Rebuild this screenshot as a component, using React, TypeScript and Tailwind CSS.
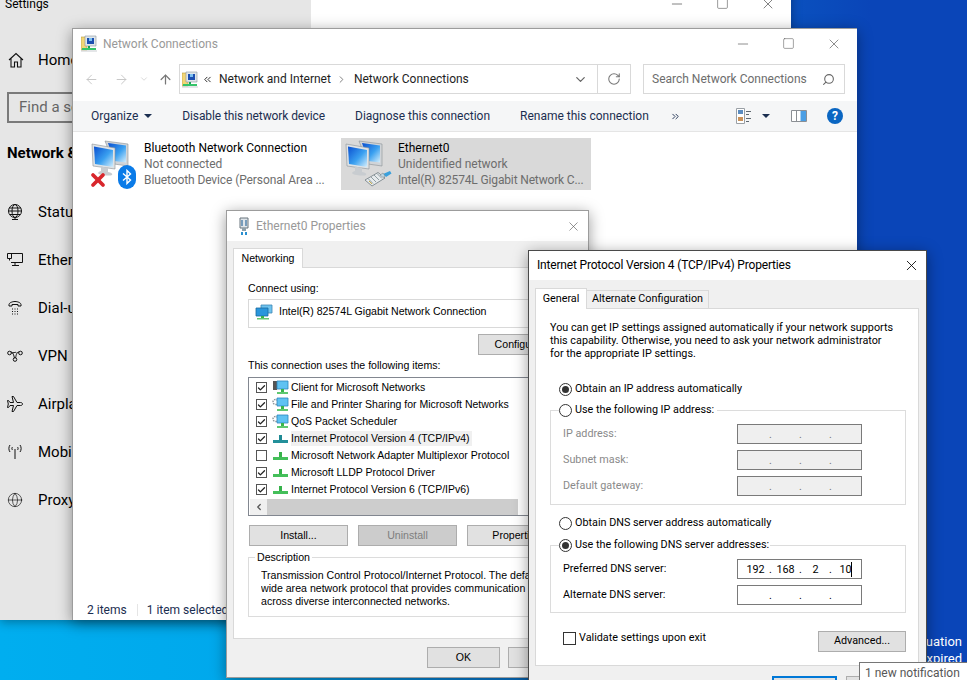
import React from "react";
import {
  ArrowLeft,
  ArrowRight,
  ArrowUp,
  Check,
  ChevronDown,
  ChevronLeft,
  ChevronRight,
  ChevronsLeft,
  ChevronsRight,
  Globe,
  Minus,
  RotateCw,
  Search,
  Square,
  X,
} from "lucide-react";

// --- small drawings ---

const HomeIcon = () => (
  <svg width="16" height="16" viewBox="0 0 16 16" fill="none" stroke="#111" strokeWidth="1.1">
    <path d="M1 8 8 1.5 15 8M3 6.5V15h3.5v-5h3v5H13V6.5" />
  </svg>
);

const StatusIcon = () => (
  <svg width="16" height="16" viewBox="0 0 16 16" fill="none" stroke="#111" strokeWidth="1">
    <circle cx="8" cy="7" r="6.5" />
    <ellipse cx="8" cy="7" rx="3" ry="6.5" />
    <path d="M1.5 7h13M2 4h12M3 10.5h10M8 13.5v2M5 15.5h6" />
  </svg>
);

const EthernetIcon = () => (
  <svg width="16" height="16" viewBox="0 0 16 16" fill="none" stroke="#111" strokeWidth="1">
    <path d="M4 1.5h11.5v9H4M8 10.5v3M5 13.5h7M.5 1.5h4v5h-4zM2.5 6.5v2" />
  </svg>
);

const DialIcon = () => (
  <svg width="16" height="16" viewBox="0 0 16 16" fill="none" stroke="#111" strokeWidth="1">
    <path d="M2 6V4.500C2 3 5 1.500 8 1.500S14 3 14 4.500V6h-3V4.500H5V6z" />
    <path d="M5 9h1M7.500 9h1M10 9h1M5 11.500h1M7.500 11.500h1M10 11.500h1M5 14h1M7.500 14h1M10 14h1" />
  </svg>
);

const VpnIcon = () => (
  <svg width="16" height="16" viewBox="0 0 16 16" fill="none" stroke="#111" strokeWidth="1">
    <circle cx="2.500" cy="5" r="1.800" />
    <circle cx="13.500" cy="5" r="1.800" />
    <circle cx="8" cy="11.500" r="1.800" />
    <path d="M4 4c3 0 3 7 4 6M12 4C9 4 9 9 8.500 10M4.300 5c2 0 4-1 5-.5" />
  </svg>
);

const PlaneIcon = () => (
  <svg width="16" height="16" viewBox="0 0 16 16" fill="none" stroke="#111" strokeWidth="1">
    <path d="M15.500 8c0-1-1-1.500-2-1.500H10L6.500.5H5l1.500 6H3L1.500 4.500H.5l.8 3.500-.8 3.500h1L3 9.500h3.500L5 15.500h1.500L10 9.500h3.500c1 0 2-.5 2-1.500z" />
  </svg>
);

const MobileIcon = () => (
  <svg width="16" height="16" viewBox="0 0 16 16" fill="none" stroke="#111" strokeWidth="1">
    <path d="M8 5v10M3 1C1.500 3 1.500 6 3 8M13 1c1.500 2 1.500 5 0 7M5.500 3c-.8 1-.8 2 0 3M10.500 3c.8 1 .8 2 0 3" />
  </svg>
);

const NetIcon = ({ id }: { id: string }) => (
  <svg width="44" height="38" viewBox="0 0 44 38">
    <defs>
      <linearGradient id={id} x1="0" y1="0" x2="1" y2="1">
        <stop offset="0" stopColor="#0a4fd0" />
        <stop offset="0.55" stopColor="#3aa0f0" />
        <stop offset="1" stopColor="#d4eefc" />
      </linearGradient>
    </defs>
    <path d="M14 1 37 4v22l-14-2z" fill="#d0d4d8" stroke="#8a9096" strokeWidth="0.6" />
    <path d="M17 3 35 5.500v17l-12-1.500z" fill={`url(#${id})`} />
    <path d="M1 4 24 8v21L2 26z" fill="#dfe3e6" stroke="#8a9096" strokeWidth="0.6" />
    <path d="M3 6.500 22 10v17L4 24z" fill={`url(#${id})`} />
    <path d="M10 26.500 17 28v4c3 .5 5 1.500 4 3-2 1-10 .5-13-1-2-1 0-2.500 2-3z" fill="#c8ccd0" />
  </svg>
);

const PlugBadge = () => (
  <svg width="28" height="17" viewBox="0 0 28 17">
    <path d="M1 10 14 2.500l7 5.500-13 8z" fill="#e6eaec" stroke="#6f7a80" strokeWidth="0.8" />
    <path d="M4 8.500l5 5M7 7l5 5M10 5l5 5M13 3.500l5 5" stroke="#7a8a90" strokeWidth="0.8" />
    <path d="M5 11l3 3" stroke="#c9b04a" strokeWidth="1" />
    <path d="M19 4l7-3 1.500 2.500L22 7z" fill="#39a0dc" />
    <path d="M16 5l3-2 2 3-2 1.500z" fill="#bcd6e4" stroke="#6f7a80" strokeWidth="0.5" />
  </svg>
);

const BluetoothBadge = () => (
  <div className="flex h-[24px] w-[18px] items-center justify-center rounded-[9px] bg-[#0a7be8]">
    <svg width="10" height="16" viewBox="0 0 10 16" fill="none" stroke="#fff" strokeWidth="1.400">
      <path d="M1 4.500 8.500 11 5 14.500v-13L8.500 5 1 11.500" />
    </svg>
  </div>
);

const SmallFolderNet = () => (
  <svg width="16" height="17" viewBox="0 0 16 17">
    <path d="M0 2h6v13H0z" fill="#f2d675" stroke="#b59a3c" strokeWidth="0.6" />
    <path d="M4 1h11v10H4z" fill="#dfe6ea" stroke="#8b959b" strokeWidth="0.6" />
    <path d="M6 3h7v6H6z" fill="#1c4fb0" />
    <path d="M8 3h3v3H8z" fill="#7cc0f0" />
    <path d="M7 11h2v2H7z" fill="#18a558" />
    <path d="M1 13h14v2H1z" fill="#35c46a" />
    <path d="M0 15.500h16v1H0z" fill="#c9ccd0" />
  </svg>
);

const SmallPlug = () => (
  <svg width="12" height="18" viewBox="0 0 12 18">
    <path d="M2 1h8v10H2z" fill="#dfe5ea" stroke="#68747c" strokeWidth="1" />
    <path d="M4 3v6M8 3v6" stroke="#4c7fa8" strokeWidth="1.400" />
    <path d="M4 11h4v3H4z" fill="#8fa0aa" />
    <path d="M3 15h2v3H3zM7 15h2v3H7z" fill="#2a8fd0" />
  </svg>
);

const AdapterIcon = () => (
  <svg width="18" height="16" viewBox="0 0 18 16">
    <path d="M6 1h11v8H6z" fill="#6fc3ee" stroke="#3d87b4" strokeWidth="0.8" />
    <path d="M1 4h12v8H1z" fill="#2a96dc" stroke="#1b6a9e" strokeWidth="0.8" />
    <path d="M6 12h3v2H6z" fill="#39b34a" />
    <path d="M2 14h12v1.500H2z" fill="#67c66f" />
  </svg>
);

const ClientIcon = ({ gear }: { gear?: boolean }) => (
  <svg width="17" height="16" viewBox="0 0 17 16">
    {gear ? (
      <circle cx="3.500" cy="5" r="2.500" fill="none" stroke="#8a9298" strokeWidth="1.400" strokeDasharray="1.500 1" />
    ) : (
      <path d="M1 1h4v9H1z" fill="#555" />
    )}
    <path d="M5 1h11v8H5z" fill="#5fc2f2" stroke="#2c86bd" strokeWidth="0.8" />
    <path d="M9 9h3v3H9z" fill="#3ab54a" />
    <path d="M5 12h11v2H5z" fill="#5fc870" />
  </svg>
);

const ProtocolIcon = ({ selected }: { selected?: boolean }) => (
  <svg width="15" height="10" viewBox="0 0 15 10">
    <path d="M6 1h3v5H6z" fill={selected ? "#1f8a94" : "#36b24a"} />
    <path d="M0 6h15v3H0z" fill={selected ? "#23909a" : "#44bf5a"} />
  </svg>
);

const ViewIcon = () => (
  <svg width="16" height="16" viewBox="0 0 16 16">
    <path d="M.5.500h8v15h-8z" fill="#fff" stroke="#9aa0a6" />
    <path d="M2 2h5v4H2z" fill="#5b8cc0" />
    <path d="M2 9h5v4H2z" fill="#c9925a" />
    <path d="M10 3h5v1h-5zM10 6h3v1h-3zM10 10h5v1h-5zM10 13h3v1h-3z" fill="#5e6870" />
  </svg>
);

const PaneIcon = () => (
  <svg width="16" height="12" viewBox="0 0 16 12">
    <path d="M.5.500h15v11H.5z" fill="#fff" stroke="#8b8f94" />
    <path d="M5.500 1v10" stroke="#8b8f94" />
    <path d="M9.500 1h5.500v10H9.500z" fill="#4a9ee4" />
  </svg>
);

// --- small controls ---

const Caret = ({ className = "" }: { className?: string }) => (
  <span className={`h-0 w-0 border-x-[4px] border-t-[4px] border-x-transparent border-t-[#1b2e50] ${className}`} />
);

const Button = ({
  label,
  width,
  disabled,
}: {
  label: string;
  width: string;
  disabled?: boolean;
}) => (
  <div
    className={`flex h-[21px] shrink-0 items-center justify-center border border-[#adadad] ${width} ${
      disabled ? "bg-[#cccccc] text-[#7e7e7e]" : "bg-[#e1e1e1] text-black"
    }`}
  >
    {label}
  </div>
);

const Radio = ({ on }: { on?: boolean }) => (
  <span className="flex h-[13px] w-[13px] shrink-0 items-center justify-center rounded-full border border-[#333] bg-white">
    {on && <span className="h-[7px] w-[7px] rounded-full bg-[#333]" />}
  </span>
);

const CheckBox = ({ on }: { on?: boolean }) => (
  <span className="flex h-[11px] w-[11px] shrink-0 items-center justify-center border border-[#555] bg-white">
    {on && <Check size={10} strokeWidth={3.5} className="text-[#222]" />}
  </span>
);

const IpField = ({
  values = ["", "", "", ""],
  disabled,
  caret,
}: {
  values?: string[];
  disabled?: boolean;
  caret?: boolean;
}) => (
  <div
    className={`flex h-[20px] w-[125px] items-center border border-[#7a7a7a] pl-[4px] ${
      disabled ? "bg-[#efefef] text-[#777]" : "bg-white text-black"
    }`}
  >
    {values.map((v, i) => (
      <React.Fragment key={i}>
        <span className="relative h-[15px] w-[27px] text-center leading-[15px]">
          {v}
          {caret && i === 3 && <span className="absolute right-[7px] top-0 h-[15px] w-px bg-black" />}
        </span>
        {i < 3 && <span className="w-[3px] text-center leading-[15px]">.</span>}
      </React.Fragment>
    ))}
  </div>
);

const IpRow = ({
  label,
  muted,
  children,
}: {
  label: string;
  muted?: boolean;
  children: React.ReactNode;
}) => (
  <div className="flex items-center justify-between pr-[43px]">
    <span className={muted ? "text-[#8a8a8a]" : "text-black"}>{label}</span>
    {children}
  </div>
);

const sidebar = [
  { label: "Status", icon: <StatusIcon /> },
  { label: "Ethernet", icon: <EthernetIcon /> },
  { label: "Dial-up", icon: <DialIcon /> },
  { label: "VPN", icon: <VpnIcon /> },
  { label: "Airplane mode", icon: <PlaneIcon /> },
  { label: "Mobile hotspot", icon: <MobileIcon /> },
  { label: "Proxy", icon: <Globe size={16} strokeWidth={1} className="text-[#111]" /> },
];

const items = [
  { label: "Client for Microsoft Networks", on: true, icon: <ClientIcon /> },
  { label: "File and Printer Sharing for Microsoft Networks", on: true, icon: <ClientIcon gear /> },
  { label: "QoS Packet Scheduler", on: true, icon: <ClientIcon gear /> },
  { label: "Internet Protocol Version 4 (TCP/IPv4)", on: true, icon: <ProtocolIcon selected />, selected: true },
  { label: "Microsoft Network Adapter Multiplexor Protocol", on: false, icon: <ProtocolIcon /> },
  { label: "Microsoft LLDP Protocol Driver", on: true, icon: <ProtocolIcon /> },
  { label: "Internet Protocol Version 6 (TCP/IPv6)", on: true, icon: <ProtocolIcon /> },
];

export default function App() {
  return (
    <div className="relative h-[680px] w-[967px] overflow-hidden bg-[linear-gradient(90deg,#00aeef_0%,#00a8ec_25%,#0a6fd0_60%,#0a45b8_90%)] font-['Roboto',sans-serif] text-[12px] text-black">
      {/* desktop watermark */}
      <div className="absolute right-[5px] top-[633px] text-right text-[13px] leading-[17px] text-white">
        <div>Evaluation</div>
        <div>expired</div>
      </div>

      {/* Settings window, mostly hidden */}
      <div className="absolute left-0 top-[-12px] flex h-[632px] w-[791px] bg-white shadow-[0_2px_10px_rgba(0,0,0,0.35)]">
        <div className="w-[311px] bg-[#e6e6e6] pt-[8px]">
          <div className="pl-[5px] text-[12px] leading-[16px]">Settings</div>
          <div className="mt-[38px] flex items-center gap-[14px] pl-[8px] text-[15px] leading-[20px]">
            <HomeIcon />
            <span>Home</span>
          </div>
          <div className="ml-[7px] mt-[22px] flex h-[31px] w-[280px] items-center border-2 border-[#7a7a7a] pb-px pl-[10px] text-[15px] text-[#666]">
            Find a setting
          </div>
          <div className="mt-[20px] pl-[7px] text-[15px] font-bold leading-[20px]">Network &amp; Internet</div>
          <div className="mt-[39px] flex flex-col gap-[28px]">
            {sidebar.map((s) => (
              <div key={s.label} className="flex items-center gap-[15px] pl-[7px] text-[15px] leading-[20px]">
                {s.icon}
                <span>{s.label}</span>
              </div>
            ))}
          </div>
        </div>
        <div className="flex flex-1 justify-end gap-[31px] pr-[15px] pt-[8px] text-[#444]">
          <Minus size={16} strokeWidth={1} />
          <Square size={13} strokeWidth={1} className="mt-[1px]" />
          <X size={16} strokeWidth={1} />
        </div>
      </div>

      {/* Network Connections */}
      <div className="absolute left-[72px] top-[28px] flex h-[592px] w-[785px] flex-col border-t border-l border-[#9c9c9c] bg-white shadow-[0_3px_14px_rgba(0,0,0,0.4)]">
        <div className="flex h-[29px] shrink-0 items-center pl-[8px] text-[#999999]">
          <SmallFolderNet />
          <span className="ml-[6px]">Network Connections</span>
          <div className="ml-auto flex items-center gap-[31px] pr-[15px] text-[#555]">
            <Minus size={16} strokeWidth={1} />
            <Square size={13} strokeWidth={1} />
            <X size={16} strokeWidth={1} />
          </div>
        </div>

        <div className="mt-[6px] flex h-[30px] shrink-0 items-center">
          <div className="flex w-[106px] items-center pl-[11px] text-[#c4c4c4]">
            <ArrowLeft size={15} strokeWidth={1.5} />
            <ArrowRight size={15} strokeWidth={1.5} className="ml-[15px]" />
            <ChevronDown size={10} strokeWidth={1.5} className="ml-[10px]" />
            <ArrowUp size={15} strokeWidth={2} className="ml-[9px] text-[#777]" />
          </div>
          <div className="flex h-[30px] w-[452px] items-center border border-[#d9d9d9] pl-[2px] text-[#1e1e1e]">
            <SmallFolderNet />
            <ChevronsLeft size={11} className="ml-[4px]" />
            <span className="ml-[6px]">Network and Internet</span>
            <ChevronRight size={11} className="ml-[5px] text-[#777]" />
            <span className="ml-[7px]">Network Connections</span>
            <ChevronDown size={15} strokeWidth={2} className="ml-auto mr-[9px] text-[#666]" />
            <div className="flex h-full w-[33px] items-center justify-center border-l border-[#d9d9d9] text-[#777]">
              <RotateCw size={14} strokeWidth={1.8} />
            </div>
          </div>
          <div className="ml-[12px] flex h-[30px] w-[202px] items-center justify-between border border-[#d9d9d9] pl-[8px] pr-[9px] text-[#6d6d6d]">
            <span>Search Network Connections</span>
            <Search size={13} strokeWidth={2} className="-scale-x-100 text-[#666]" />
          </div>
        </div>

        <div className="mt-[7px] flex h-[31px] shrink-0 items-center border-b border-[#e5e5e5] bg-[#f5f6f7] pl-[18px] text-[#1b2e50]">
          <span>Organize</span>
          <Caret className="ml-[6px]" />
          <span className="ml-[30px] tracking-[-0.1px]">Disable this network device</span>
          <span className="ml-[30px]">Diagnose this connection</span>
          <span className="ml-[30px]">Rename this connection</span>
          <ChevronsRight size={11} strokeWidth={2} className="ml-[21px]" />
          <div className="ml-auto flex items-center pr-[14px]">
            <ViewIcon />
            <Caret className="ml-[10px]" />
            <span className="ml-[21px]">
              <PaneIcon />
            </span>
            <span className="ml-[20px] flex h-[16px] w-[16px] items-center justify-center rounded-full bg-[#0a66c2] text-[12px] font-bold text-white">
              ?
            </span>
          </div>
        </div>

        <div className="flex min-h-0 flex-1 items-start pl-[18px] pt-[6px]">
          <div className="flex h-[52px] w-[250px] items-center">
            <div className="relative h-[52px] w-[53px] shrink-0 pt-[2px]">
              <NetIcon id="screenA" />
              <X size={20} strokeWidth={4.5} className="absolute bottom-0 left-[-3px] text-[#d8262c]" />
              <div className="absolute bottom-[1px] left-[27px]">
                <BluetoothBadge />
              </div>
            </div>
            <div className="flex flex-col leading-[16px] text-[#6d6d6d]">
              <span className="text-black">Bluetooth Network Connection</span>
              <span>Not connected</span>
              <span className="tracking-[-0.1px]">Bluetooth Device (Personal Area ...</span>
            </div>
          </div>
          <div className="flex h-[52px] w-[250px] items-center bg-[#d9d9d9] pl-[4px]">
            <div className="relative h-[52px] w-[53px] shrink-0 pt-[2px]">
              <NetIcon id="screenB" />
              <div className="absolute bottom-[3px] left-[19px]">
                <PlugBadge />
              </div>
            </div>
            <div className="flex flex-col leading-[16px] text-[#6d6d6d]">
              <span className="text-black">Ethernet0</span>
              <span>Unidentified network</span>
              <span className="tracking-[-0.15px]">Intel(R) 82574L Gigabit Network C...</span>
            </div>
          </div>
        </div>

        <div className="flex h-[16px] shrink-0 items-center pb-[4px] pl-[14px] text-[#1b2e50]">
          <span>2 items</span>
          <span className="ml-[10px] h-[12px] w-px bg-[#e5e5e5]" />
          <span className="ml-[9px]">1 item selected</span>
        </div>
      </div>

      {/* Ethernet0 Properties */}
      <div className="absolute left-[226px] top-[210px] flex h-[468px] w-[363px] flex-col border border-[#9c9c9c] bg-[#f0f0f0] font-['Liberation_Sans',sans-serif] text-[10.6px] shadow-[0_3px_14px_rgba(0,0,0,0.4)]">
        <div className="flex h-[30px] shrink-0 items-center bg-white pl-[11px] font-['Roboto',sans-serif] text-[12px] text-[#999999]">
          <SmallPlug />
          <span className="ml-[6px]">Ethernet0 Properties</span>
          <X size={15} strokeWidth={1} className="ml-auto mr-[7px] text-[#555]" />
        </div>
        <div className="flex min-h-0 flex-1 flex-col pl-[6px] pr-[6px] pt-[7px]">
          <div className="z-10 -mb-px flex h-[20px] w-[70px] items-center justify-center border border-b-0 border-[#d9d9d9] bg-white">
            Networking
          </div>
          <div className="h-[372px] border border-[#d9d9d9] bg-white pl-[14px] pt-[13px]">
            <div className="leading-[14px]">Connect using:</div>
            <div className="mt-[4px] flex h-[29px] w-[322px] items-center border border-[#d9d9d9] pb-[3px] pl-[6px]">
              <AdapterIcon />
              <span className="ml-[6px]">Intel(R) 82574L Gigabit Network Connection</span>
            </div>
            <div className="mt-[6px] flex w-[318px] justify-end">
              <Button label="Configure..." width="w-[88px]" />
            </div>
            <div className="mt-[3px] leading-[14px]">This connection uses the following items:</div>
            <div className="mt-[5px] flex h-[139px] w-[322px] flex-col border border-[#828790] pt-px">
              <div className="flex flex-1 flex-col">
                {items.map((it) => (
                  <div key={it.label} className="flex h-[17px] items-center pl-[7px]">
                    <CheckBox on={it.on} />
                    <span className="flex w-[24px] justify-center pl-[2px]">{it.icon}</span>
                    <span className={`flex h-[15px] items-center pr-[2px] text-[10.5px] ${it.selected ? "bg-[#f0f0f0]" : ""}`}>
                      {it.label}
                    </span>
                  </div>
                ))}
              </div>
              <div className="flex h-[16px] items-center pl-[1px] pr-[1px]">
                <div className="flex h-[16px] w-[17px] items-center justify-center bg-[#f0f0f0]">
                  <ChevronLeft size={10} strokeWidth={3} className="text-[#555]" />
                </div>
                <div className="h-[16px] w-[251px] bg-[#cdcdcd]" />
              </div>
            </div>
            <div className="mt-[9px] flex gap-[10px] pl-[1px]">
              <Button label="Install..." width="w-[99px]" />
              <Button label="Uninstall" width="w-[99px]" disabled />
              <Button label="Properties" width="w-[99px]" />
            </div>
            <fieldset className="mt-[4px] h-[67px] w-[322px] border border-[#dcdcdc] pl-[12px]">
              <legend className="ml-[-6px] bg-white px-[2px] leading-[14px]">Description</legend>
              <p className="mt-[5px] w-[300px] overflow-hidden leading-[13px]">
                <span className="block whitespace-nowrap">Transmission Control Protocol/Internet Protocol. The default</span>
                <span className="block whitespace-nowrap">wide area network protocol that provides communication</span>
                <span className="block whitespace-nowrap">across diverse interconnected networks.</span>
              </p>
            </fieldset>
          </div>
          <div className="mt-[8px] flex gap-[8px] pl-[194px]">
            <Button label="OK" width="w-[73px]" />
            <Button label="Cancel" width="w-[73px]" />
          </div>
        </div>
      </div>

      {/* IPv4 Properties */}
      <div className="absolute left-[528px] top-[250px] flex h-[440px] w-[399px] flex-col border border-[#4a4a4a] bg-[#f0f0f0] text-[10.8px] shadow-[0_3px_14px_rgba(0,0,0,0.4)]">
        <div className="flex h-[29px] shrink-0 items-center justify-between bg-white pb-px pl-[8px] pr-[6px] text-[12px] tracking-[-0.18px]">
          <span>Internet Protocol Version 4 (TCP/IPv4) Properties</span>
          <X size={17} strokeWidth={1.2} />
        </div>
        <div className="flex flex-col pl-[6px] pr-[7px] pt-[8px]">
          <div className="z-10 -mb-px flex items-end">
            <div className="flex h-[21px] w-[52px] items-center justify-center border border-b-0 border-[#d9d9d9] bg-white">
              General
            </div>
            <div className="flex h-[19px] w-[122px] items-center justify-center whitespace-nowrap border border-l-0 border-[#d9d9d9] bg-[#f0f0f0]">
              Alternate Configuration
            </div>
          </div>
          <div className="h-[358px] border border-[#d9d9d9] bg-white pl-[14px] pr-[12px] pt-[12px]">
            <p className="whitespace-nowrap leading-[13px]">
              You can get IP settings assigned automatically if your network supports
              <br />
              this capability. Otherwise, you need to ask your network administrator
              <br />
              for the appropriate IP settings.
            </p>
            <div className="mt-[21px] flex h-[17px] items-center gap-[3px] pl-[9px]">
              <Radio on />
              <span>Obtain an IP address automatically</span>
            </div>
            <fieldset className="mt-[4px] border border-[#dcdcdc] pb-[8px] pl-[12px]">
              <legend className="ml-[-4px] flex h-[17px] items-center gap-[3px] bg-white pr-[3px]">
                <Radio />
                <span>Use the following IP address:</span>
              </legend>
              <div className="mt-[5px] flex flex-col gap-[6px]">
                <IpRow label="IP address:" muted>
                  <IpField disabled />
                </IpRow>
                <IpRow label="Subnet mask:" muted>
                  <IpField disabled />
                </IpRow>
                <IpRow label="Default gateway:" muted>
                  <IpField disabled />
                </IpRow>
              </div>
            </fieldset>
            <div className="mt-[10px] flex h-[17px] items-center gap-[3px] pl-[9px]">
              <Radio />
              <span>Obtain DNS server address automatically</span>
            </div>
            <fieldset className="mt-[5px] border border-[#dcdcdc] pb-[7px] pl-[12px]">
              <legend className="ml-[-4px] flex h-[17px] items-center gap-[3px] bg-white pr-[1px]">
                <Radio on />
                <span>Use the following DNS server addresses:</span>
              </legend>
              <div className="mt-[5px] flex flex-col gap-[6px]">
                <IpRow label="Preferred DNS server:">
                  <IpField values={["192", "168", "2", "10"]} caret />
                </IpRow>
                <IpRow label="Alternate DNS server:">
                  <IpField />
                </IpRow>
              </div>
            </fieldset>
            <div className="mt-[17px] flex items-start justify-between pl-[13px]">
              <div className="flex items-center gap-[3px]">
                <span className="h-[13px] w-[13px] border border-[#333]" />
                <span>Validate settings upon exit</span>
              </div>
              <div className="mt-px">
                <Button label="Advanced..." width="w-[88px]" />
              </div>
            </div>
          </div>
          <div className="mt-[10px] flex gap-[9px] pl-[237px]">
            <div className="flex h-[22px] w-[73px] items-center justify-center border-2 border-[#0078d7] bg-[#e1e1e1]">OK</div>
            <Button label="Cancel" width="w-[73px]" />
          </div>
        </div>
      </div>

      {/* tooltip */}
      <div className="absolute left-[859px] top-[662px] h-[24px] w-[120px] border border-[#767676] bg-white pl-[5px] pt-px text-[#575757]">
        1 new notification
      </div>
    </div>
  );
}
